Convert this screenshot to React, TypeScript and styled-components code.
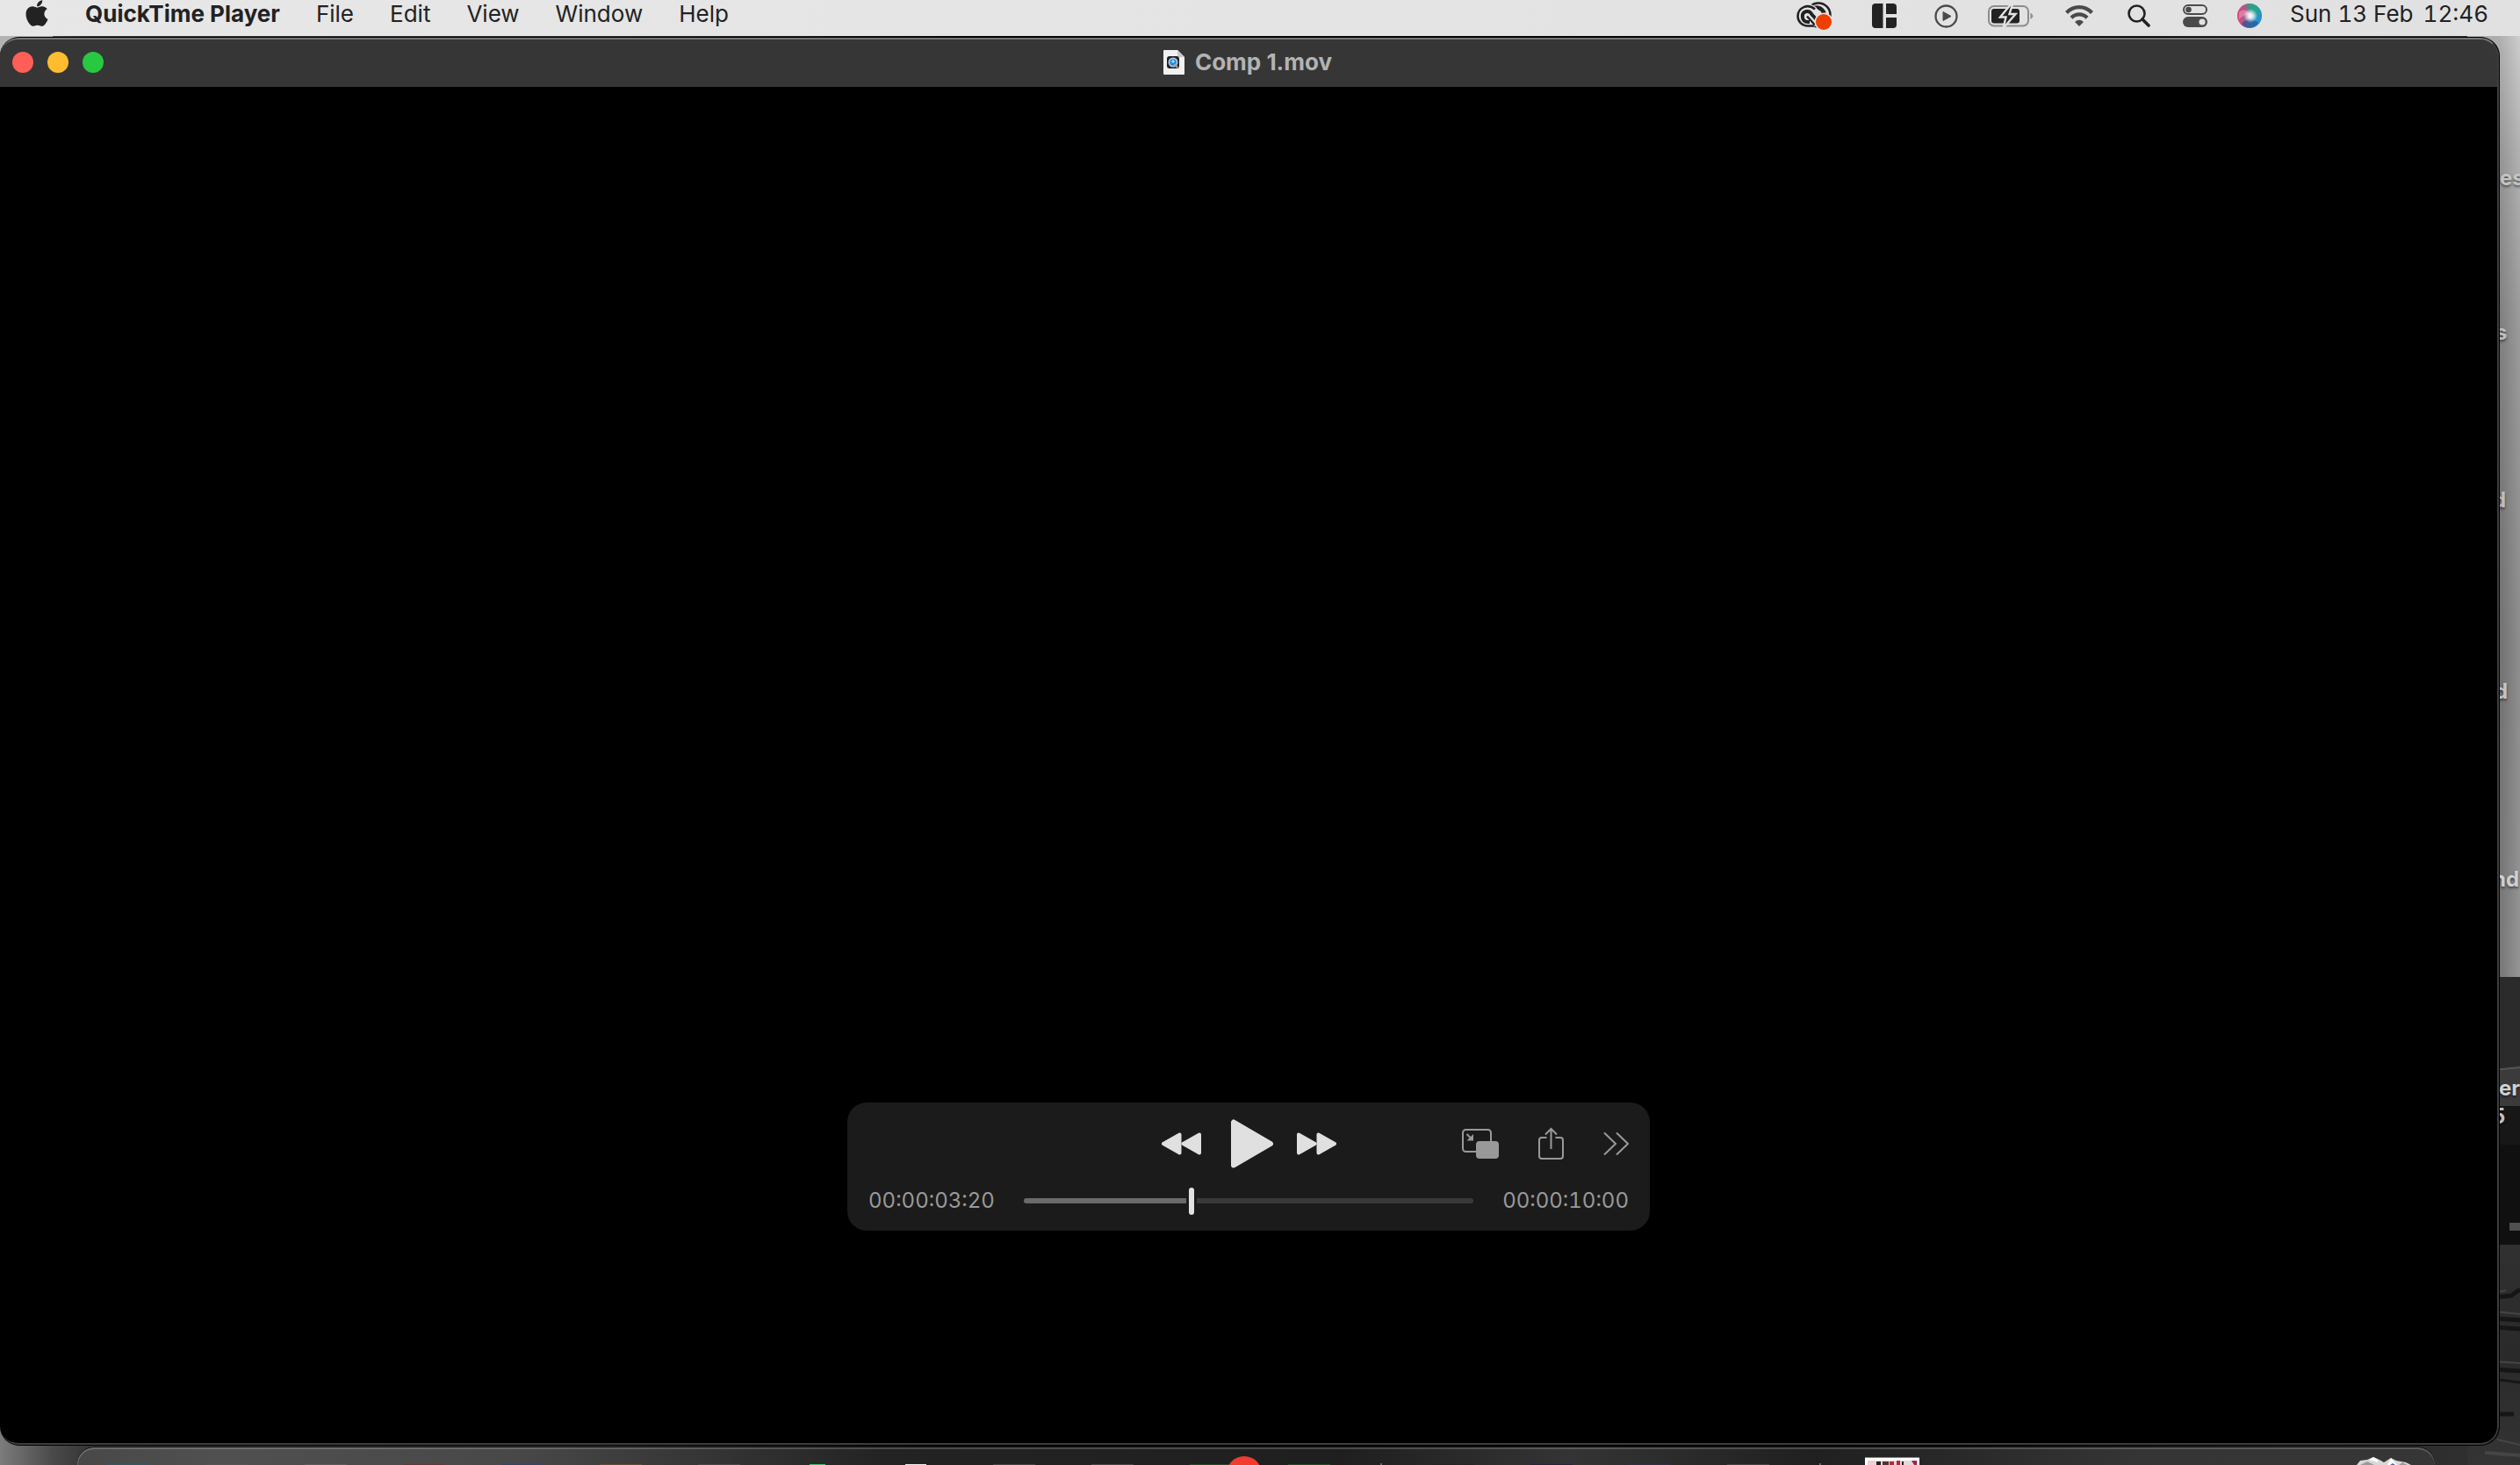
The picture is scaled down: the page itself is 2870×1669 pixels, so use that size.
import React from "react";
import styled, { createGlobalStyle, css } from "styled-components";
import { FaApple } from "react-icons/fa";

const GlobalStyle = createGlobalStyle`
  *, *::before, *::after { box-sizing: border-box; }
  body { margin: 0; overflow: hidden; }
`;

const plain = css`
  appearance: none;
  border: 0;
  padding: 0;
  margin: 0;
  background: none;
  color: inherit;
  font: inherit;
  display: flex;
  align-items: center;
  flex: none;
`;

const Desktop = styled.div`
  position: relative;
  display: flex;
  flex-direction: column;
  height: 100vh;
  overflow: hidden;
  font-family: Inter, "Liberation Sans", sans-serif;
  background:
    linear-gradient(#b4b4b4, #7c7c7c) 0 0 / 60px 1600px no-repeat,
    linear-gradient(90deg, #7c7c7c 0, #4a4a4a 60px, #363636 100px, #303030 700px, #080808 1100px, #080808 2200px, #2a2a2a 2600px, #303030 100%);
`;

const Wallpaper = styled.svg`
  position: absolute;
  top: 0;
  right: 0;
`;

const FileLabel = styled.span<{ $top: number; $left: number; $color: string }>`
  position: absolute;
  top: ${(p) => p.$top}px;
  left: ${(p) => p.$left}px;
  color: ${(p) => p.$color};
  font-size: 24px;
  line-height: 29px;
  font-weight: 700;
  white-space: pre;
  text-shadow: 0 2px 3px rgba(0, 0, 0, 0.5);
`;

const MenuBar = styled.header`
  position: relative;
  display: flex;
  justify-content: space-between;
  flex: none;
  height: 41px;
  padding: 0 36px 0 28px;
  background: linear-gradient(90deg, #e7e7e7, #e1e1e1);
  color: #222;
  font-size: 26px;
  line-height: 32px;
`;

const Menus = styled.nav`
  display: flex;
  align-items: flex-start;
  gap: 41px;
`;

const MenuButton = styled.button<{ $bold?: boolean }>`
  ${plain}
  height: 32px;
  font-weight: ${(p) => (p.$bold ? 700 : 400)};
`;

const AppleButton = styled.button`
  ${plain}
  width: 28px;
  height: 30px;
  justify-content: center;
`;

const Status = styled.div`
  display: flex;
  align-items: flex-start;
`;

const StatusButton = styled.button<{ $gap: number }>`
  ${plain}
  height: 36px;
  margin-right: ${(p) => p.$gap}px;
`;

const Clock = styled.time`
  display: flex;
  justify-content: space-between;
  min-width: 226px;
  font-variant-numeric: tabular-nums;
`;

const Window = styled.main`
  position: relative;
  display: flex;
  flex-direction: column;
  flex: 1;
  min-height: 0;
  margin: 1px 23px 2px 0;
  border: 1px solid #000;
  border-left: 0;
  border-radius: 22px;
  background: #000;
  overflow: hidden;

  &::after {
    content: "";
    position: absolute;
    inset: 0;
    border: 2px solid #3d3d3d;
    border-left: 0;
    border-top-color: #777;
    border-radius: 21px;
    pointer-events: none;
  }
`;

const TitleBar = styled.header`
  display: grid;
  grid-template-columns: 1fr auto 1fr;
  align-items: center;
  flex: none;
  height: 56px;
  padding: 0 18px 0 14px;
  background: #363636;
`;

const Lights = styled.div`
  display: flex;
  gap: 16px;
`;

const Light = styled.button<{ $color: string }>`
  ${plain}
  width: 24px;
  height: 24px;
  border-radius: 50%;
  background: ${(p) => p.$color};
`;

const Title = styled.h1`
  display: flex;
  align-items: center;
  gap: 12px;
  margin: 0;
  color: #b3b3b3;
  font-size: 26px;
  line-height: 32px;
  font-weight: 700;
`;

const Video = styled.section`
  display: flex;
  flex: 1;
  align-items: flex-end;
  justify-content: center;
  padding: 0 2px 244px 0;
`;

const Player = styled.div`
  width: 914px;
  padding: 19px 24px 18px;
  border-radius: 22px;
  background: #1b1b1b;
  color: #999;
`;

const Controls = styled.div`
  display: grid;
  grid-template-columns: 1fr auto 1fr;
  align-items: center;
  height: 56px;
  margin-bottom: 21px;
`;

const Transport = styled.div`
  grid-column: 2;
  display: flex;
  align-items: center;
  gap: 27px;
  color: #e0e0e0;
`;

const Actions = styled.div`
  display: flex;
  align-items: center;
  justify-content: flex-end;
  gap: 45px;
`;

const IconButton = styled.button`
  ${plain}
`;

const Timeline = styled.div`
  display: flex;
  align-items: center;
  gap: 33px;
  font-size: 24px;
  line-height: 32px;
`;

const Time = styled.time`
  font-variant-numeric: tabular-nums;
`;

const Scrubber = styled.input`
  appearance: none;
  flex: 1;
  min-width: 0;
  height: 32px;
  margin: 0;
  background: transparent;

  &::-webkit-slider-runnable-track {
    height: 6px;
    border-radius: 3px;
    background: linear-gradient(90deg, #6a6a6a 37%, #393939 37%);
  }

  &::-webkit-slider-thumb {
    appearance: none;
    width: 6px;
    height: 31px;
    margin-top: -12px;
    border-radius: 3px;
    background: #e2e2e2;
    box-shadow: 3px 0 0 #1b1b1b, -3px 0 0 #1b1b1b;
  }
`;

const Dock = styled.footer`
  position: relative;
  display: flex;
  justify-content: center;
  flex: none;
  height: 20px;
  margin: 0 97px 0 88px;
  border-radius: 44px 44px 0 0;
  background: linear-gradient(90deg, #484848, #505050 160px, #484848 500px, #232323 920px, #1f1f1f 1440px, #343434 1700px, #202020 1980px, #353535 2350px, #363636);
  box-shadow: 0 -1px 0 #111, inset 0 2px 0 rgba(255, 255, 255, 0.18), inset 1px 0 0 rgba(255, 255, 255, 0.15);
`;

const Tile = styled.div`
  position: relative;
  display: flex;
  justify-content: center;
  align-items: flex-end;
  flex: none;
  width: 112px;
`;

const AppEdge = styled.div<{ $color: string; $width: number }>`
  width: ${(p) => p.$width}px;
  height: 1px;
  background: ${(p) => p.$color};
`;

const Badge = styled.div`
  position: absolute;
  left: 74px;
  top: 10px;
  width: 40px;
  height: 40px;
  border-radius: 50%;
  background: #f23c30;
`;

const Divider = styled.div`
  display: flex;
  justify-content: center;
  align-items: flex-end;
  flex: none;
  width: 52px;

  &::after {
    content: "";
    width: 2px;
    height: 2px;
    background: #666;
  }
`;

const labels = [
  { text: "es", top: 188, left: 2847, color: "#c4c4c4" },
  { text: "s", top: 364, left: 2842, color: "#bdbdbd" },
  { text: "d", top: 555, left: 2839, color: "#bdbdbd" },
  { text: "d", top: 773, left: 2841, color: "#c4c4c4" },
  { text: "nd", top: 987, left: 2839, color: "#cfcfcf" },
  { text: "er", top: 1225, left: 2846, color: "#d0d0d0" },
  { text: "5", top: 1257, left: 2838, color: "#c0c0c0" },
];

const WallpaperArt = () => (
  <Wallpaper width="60" height="1669" viewBox="0 0 60 1669" aria-hidden="true">
    <defs>
      <linearGradient id="wall" x1="0" y1="0" x2="0" y2="1">
        <stop offset="0" stopColor="#c6c6c6" />
        <stop offset="0.12" stopColor="#a8a8a8" />
        <stop offset="0.3" stopColor="#8e8e8e" />
        <stop offset="0.65" stopColor="#7e7e7e" />
        <stop offset="1" stopColor="#868686" />
      </linearGradient>
      <linearGradient id="wallSide" x1="0" y1="0" x2="1" y2="0">
        <stop offset="0.6" stopColor="#000" stopOpacity="0.12" />
        <stop offset="1" stopColor="#fff" stopOpacity="0.12" />
      </linearGradient>
      <linearGradient id="ground" x1="0" y1="0" x2="0" y2="1">
        <stop offset="0" stopColor="#303030" />
        <stop offset="0.5" stopColor="#2a2a2a" />
        <stop offset="1" stopColor="#343434" />
      </linearGradient>
    </defs>
    <rect y="40" width="60" height="1074" fill="url(#wall)" />
    <rect y="40" width="60" height="1074" fill="url(#wallSide)" />
    <rect y="1113" width="60" height="106" fill="#2b2b2b" />
    <path d="M30 1219L60 1216V1260H30Z" fill="#3b3b3b" />
    <path d="M30 1219L60 1216" stroke="#555" strokeWidth="2" />
    <rect y="1260" width="60" height="158" fill="#101010" />
    <rect y="1260" width="60" height="44" fill="#171717" />
    <rect x="48" y="1393" width="12" height="9" fill="#505050" />
    <rect y="1418" width="60" height="251" fill="url(#ground)" />
    <g fill="none" stroke="#161616" strokeWidth="5">
      <path d="M30 1478L50 1476L60 1469" />
      <path d="M30 1502L60 1504" />
      <path d="M30 1512L60 1514" />
      <path d="M30 1560L60 1562" />
      <path d="M30 1571L60 1575" strokeWidth="3" />
      <path d="M36 1611H53" />
    </g>
    <g fill="none" stroke="#454545" strokeWidth="2">
      <path d="M30 1473L44 1470" />
      <path d="M30 1494L60 1497" />
      <path d="M30 1551L60 1553" />
      <path d="M34 1640L60 1646" />
      <path d="M20 1655L60 1658" strokeWidth="4" />
    </g>
  </Wallpaper>
);

const CloudIcon = () => (
  <svg width="41" height="36" viewBox="0 0 41 36" fill="none" aria-hidden="true">
    <circle cx="25" cy="17" r="13.500" stroke="#222" strokeWidth="2.500" />
    <path d="M17.500 10.500C22 6.500 29 8.500 31.500 15" stroke="#222" strokeWidth="4.500" />
    <circle cx="12.500" cy="18.500" r="14" fill="#e3e3e3" />
    <path d="M21 10.500C13 3.500 1.500 8.500 1.500 18.500C1.500 25 6.500 29.500 13 29.500H20" stroke="#222" strokeWidth="2.500" />
    <path d="M15 25H13C9 25 6.800 22 6.800 18.800C6.800 12 15 11 17.500 16.500L23 22.500" stroke="#222" strokeWidth="4" />
    <path d="M12 18.500L21 28.500" stroke="#222" strokeWidth="2.500" />
    <circle cx="31" cy="25" r="10.500" fill="#e3e3e3" />
    <circle cx="31" cy="25" r="9" fill="#ee3f00" />
  </svg>
);

const PanesIcon = () => (
  <svg width="28" height="28" viewBox="0 0 28 28" fill="#222" aria-hidden="true">
    <path d="M4 0H12.500V28H4Q0 28 0 24V4Q0 0 4 0Z" />
    <path d="M16 0H24Q28 0 28 4V12H16Z" />
    <path d="M16 16H28V24Q28 28 24 28H16Z" />
  </svg>
);

const PlayCircleIcon = () => (
  <svg width="27" height="27" viewBox="0 0 27 27" aria-hidden="true">
    <circle cx="13.500" cy="13.500" r="12" fill="none" stroke="#4a4a4a" strokeWidth="2.300" />
    <path d="M10 8.500V18.500L19 13.500Z" fill="#4a4a4a" stroke="#4a4a4a" strokeLinejoin="round" />
  </svg>
);

const BatteryIcon = () => (
  <svg width="52" height="26" viewBox="0 0 52 26" aria-hidden="true">
    <rect x="1" y="2" width="45" height="22.500" rx="6" fill="none" stroke="#8d8d8d" strokeWidth="2" />
    <path d="M48.500 9.500Q54 13 48.500 17Z" fill="#8d8d8d" />
    <rect x="4" y="5" width="32" height="16.500" rx="3" fill="#222" />
    <path d="M26 0L14 14.500H20.500L17.500 27L31.500 11H24.500L28 0Z" fill="#222" stroke="#e2e2e2" strokeWidth="2.400" />
  </svg>
);

const WifiIcon = () => (
  <svg width="32" height="24" viewBox="0 0 32 24" fill="none" aria-hidden="true">
    <path d="M1.500 8.500C9.500 0 22.500 0 30.500 8.500" stroke="#4a4a4a" strokeWidth="4.200" />
    <path d="M7 14.200C12 9 20 9 25 14.200" stroke="#4a4a4a" strokeWidth="4.200" />
    <path d="M11 19Q16 14.500 21 19L16 24Z" fill="#4a4a4a" />
  </svg>
);

const SearchIcon = () => (
  <svg width="26" height="26" viewBox="0 0 26 26" fill="none" stroke="#222" aria-hidden="true">
    <circle cx="10.500" cy="10.500" r="9" strokeWidth="2.600" />
    <path d="M17 17L24 24" strokeWidth="3.600" strokeLinecap="round" />
  </svg>
);

const SwitchesIcon = () => (
  <svg width="28" height="26" viewBox="0 0 28 26" aria-hidden="true">
    <rect x="1" y="1" width="26" height="10" rx="5" fill="none" stroke="#4a4a4a" strokeWidth="2" />
    <circle cx="6.500" cy="6" r="3.300" fill="#4a4a4a" />
    <rect y="14" width="28" height="12" rx="6" fill="#4a4a4a" />
    <circle cx="22" cy="20" r="3.600" fill="#e1e1e1" />
  </svg>
);

const SiriIcon = () => (
  <svg width="28" height="28" viewBox="0 0 28 28" aria-hidden="true">
    <defs>
      <linearGradient id="orb" x1="0" y1="0.500" x2="1" y2="0.600">
        <stop offset="0" stopColor="#e0447c" />
        <stop offset="0.35" stopColor="#a15f91" />
        <stop offset="0.7" stopColor="#2d9ec0" />
        <stop offset="1" stopColor="#2587d8" />
      </linearGradient>
      <radialGradient id="shine">
        <stop offset="0" stopColor="#fff" />
        <stop offset="0.35" stopColor="#fff" stopOpacity="0.8" />
        <stop offset="1" stopColor="#fff" stopOpacity="0" />
      </radialGradient>
    </defs>
    <circle cx="14" cy="14" r="14" fill="url(#orb)" />
    <path d="M10 1C18-2 26 4 27 12L15 12Z" fill="#22a67c" opacity="0.8" />
    <path d="M5 23C11 15 20 18 24 22C19 30 9 29 5 23Z" fill="#214f96" opacity="0.65" />
    <path d="M2 10Q9 4 15 13Q8 12 2 18Z" fill="#ef9ab8" opacity="0.6" />
    <circle cx="15" cy="14" r="8" fill="url(#shine)" />
  </svg>
);

const MovieFileIcon = () => (
  <svg width="24" height="28" viewBox="0 0 24 28" aria-hidden="true">
    <path d="M1 0H16L24 8V27Q24 28 23 28H1Q0 28 0 27V1Q0 0 1 0Z" fill="#f3f0f2" />
    <path d="M16 0L24 8H17Q16 8 16 7Z" fill="#c9c9cc" />
    <rect x="4" y="7" width="14" height="14" rx="3" fill="#1d2126" />
    <circle cx="11" cy="14" r="4.600" fill="#1c86e8" stroke="#bcc8d2" strokeWidth="1.800" />
    <circle cx="11" cy="13" r="1.800" fill="#8fe0ff" />
    <path d="M12.500 16L16 20" stroke="#9aa3ab" strokeWidth="2.500" />
  </svg>
);

const SkipIcon = ({ back }: { back?: boolean }) => (
  <svg width="45" height="26" viewBox="0 0 45 26" fill="currentColor" stroke="currentColor" strokeWidth="4" strokeLinejoin="round" aria-hidden="true">
    <g transform={back ? "translate(45 0) scale(-1 1)" : undefined}>
      <path d="M2 2.500V23.500L20.500 13Z" />
      <path d="M24.500 2.500V23.500L43 13Z" />
    </g>
  </svg>
);

const PlayIcon = () => (
  <svg width="55" height="56" viewBox="-6 0 55 56" fill="currentColor" stroke="currentColor" strokeWidth="6" strokeLinejoin="round" aria-hidden="true">
    <path d="M4 3.500V52.500L46 28Z" />
  </svg>
);

const PipIcon = () => (
  <svg width="42" height="34" viewBox="0 0 42 34" fill="none" aria-hidden="true">
    <rect x="1" y="1" width="32" height="25" rx="3.500" stroke="#999" strokeWidth="2" />
    <path d="M5.500 6L11 11.500" stroke="#999" strokeWidth="2" />
    <path d="M13 6V13.500H5.500Z" fill="#999" />
    <rect x="16" y="14" width="26" height="20" rx="4" fill="#999" />
  </svg>
);

const ShareIcon = () => (
  <svg width="29" height="38" viewBox="0 0 29 38" fill="none" stroke="#999" strokeWidth="2" aria-hidden="true">
    <path d="M9.500 12H4Q1 12 1 15V33Q1 36 4 36H25Q28 36 28 33V15Q28 12 25 12H19.500" />
    <path d="M14.500 25V2M8 8.500L14.500 2L21 8.500" />
  </svg>
);

const MoreIcon = () => (
  <svg width="29" height="28" viewBox="0 0 29 28" fill="none" stroke="#999" strokeWidth="2" aria-hidden="true">
    <path d="M1 1.500L14 14L1 26.500M15 1.500L28 14L15 26.500" />
  </svg>
);

const DownloadsStack = () => (
  <svg width="62" height="9" viewBox="0 0 62 9" aria-hidden="true">
    <rect width="62" height="9" fill="#fff" />
    <rect width="62" height="1" fill="#888" />
    <path d="M3 4H60V9H3Z" fill="#f0d0d2" />
    <path d="M13 5H18V9H13ZM42 5H44V9H42Z" fill="#1b2424" />
    <path d="M20 5H27V9H20Z" fill="#5a3030" />
    <path d="M28 5H33V9H28ZM36 4H40V9H36Z" fill="#b02c3c" />
    <path d="M46 4H52V9H46Z" fill="#ddd" />
    <path d="M53 4H59V9H56Z" fill="#a82050" />
  </svg>
);

const TrashPaper = () => (
  <svg width="62" height="9" viewBox="0 0 62 9" aria-hidden="true">
    <path d="M0 9L4 4L12 3L19 0L26 3L31 6L39 1L45 4L56 6L62 9Z" fill="#d8d8d8" />
    <path d="M14 3L19 0L24 3V6ZM35 9L39 1L46 9Z" fill="#fff" />
    <path d="M4 9L12 5L20 9ZM48 9L52 6L58 9Z" fill="#9a9a9a" />
    <path d="M38 9L41 7L44 9Z" fill="#5165b5" />
  </svg>
);

const leftApps = [
  { color: "#345762", width: 48 },
  { color: "#555", width: 48 },
  { color: "#5c5c5c", width: 48 },
  { color: "#613a3a", width: 48 },
  { color: "#34446b", width: 48 },
  { color: "#5a5032", width: 48 },
  { color: "#484848", width: 48 },
  { color: "#36c76a", width: 18 },
  { color: "#eee", width: 24 },
  { color: "#444", width: 48 },
  { color: "#484848", width: 48 },
  { color: "#244c28", width: 48 },
  { color: "#244c28", width: 48 },
];
const rightApps = ["#252525", "#26263c", "#303044", "#444"];

export default function App() {
  return (
    <>
      <GlobalStyle />
      <Desktop>
        <WallpaperArt />
        {labels.map((label) => (
          <FileLabel key={label.top} $top={label.top} $left={label.left} $color={label.color}>
            {label.text}
          </FileLabel>
        ))}
        <MenuBar>
          <Menus aria-label="Menu bar">
            <AppleButton aria-label="Apple menu"><FaApple size={34} /></AppleButton>
            <MenuButton $bold>QuickTime Player</MenuButton>
            {["File", "Edit", "View", "Window", "Help"].map((name) => (
              <MenuButton key={name}>{name}</MenuButton>
            ))}
          </Menus>
          <Status>
            <StatusButton aria-label="Creative Cloud" $gap={45}><CloudIcon /></StatusButton>
            <StatusButton aria-label="Window layout" $gap={43}><PanesIcon /></StatusButton>
            <StatusButton aria-label="Now playing" $gap={34}><PlayCircleIcon /></StatusButton>
            <StatusButton aria-label="Battery" $gap={36}><BatteryIcon /></StatusButton>
            <StatusButton aria-label="Wi-Fi" $gap={39}><WifiIcon /></StatusButton>
            <StatusButton aria-label="Search" $gap={37}><SearchIcon /></StatusButton>
            <StatusButton aria-label="Control Centre" $gap={34}><SwitchesIcon /></StatusButton>
            <StatusButton aria-label="Siri" $gap={32}><SiriIcon /></StatusButton>
            <Clock><span>Sun 13 Feb</span><span>12:46</span></Clock>
          </Status>
        </MenuBar>
        <Window>
          <TitleBar>
            <Lights>
              <Light $color="#ff5f57" aria-label="Close" />
              <Light $color="#febc2e" aria-label="Minimise" />
              <Light $color="#28c840" aria-label="Zoom" />
            </Lights>
            <Title><MovieFileIcon />Comp 1.mov</Title>
          </TitleBar>
          <Video aria-label="Video">
            <Player>
              <Controls>
                <Transport>
                  <IconButton aria-label="Rewind"><SkipIcon back /></IconButton>
                  <IconButton aria-label="Play"><PlayIcon /></IconButton>
                  <IconButton aria-label="Fast forward"><SkipIcon /></IconButton>
                </Transport>
                <Actions>
                  <IconButton aria-label="Picture in picture"><PipIcon /></IconButton>
                  <IconButton aria-label="Share"><ShareIcon /></IconButton>
                  <IconButton aria-label="More"><MoreIcon /></IconButton>
                </Actions>
              </Controls>
              <Timeline>
                <Time>00:00:03:20</Time>
                <Scrubber type="range" aria-label="Position" min={0} max={1000} defaultValue={371} />
                <Time>00:00:10:00</Time>
              </Timeline>
            </Player>
          </Video>
        </Window>
        <Dock>
          {leftApps.map((app, i) => (
            <Tile key={i}>
              <AppEdge $color={app.color} $width={app.width} />
              {i === 11 && <Badge />}
            </Tile>
          ))}
          <Divider />
          {rightApps.map((color, i) => (
            <Tile key={i}><AppEdge $color={color} $width={48} /></Tile>
          ))}
          <Divider />
          <Tile><DownloadsStack /></Tile>
          <Tile /><Tile /><Tile /><Tile />
          <Tile><TrashPaper /></Tile>
        </Dock>
      </Desktop>
    </>
  );
}
